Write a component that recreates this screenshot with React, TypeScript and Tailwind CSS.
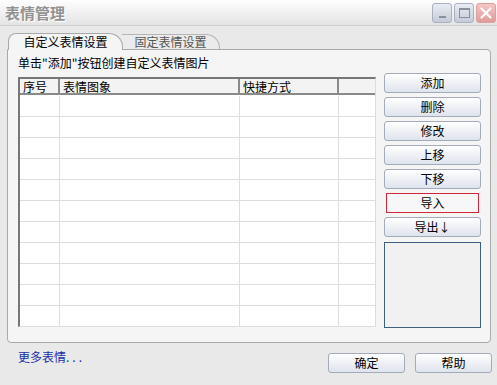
import React from 'react';

const btn =
  'h-[20px] w-[97px] flex items-center justify-center rounded-[3px] border border-[#a3abbb] bg-gradient-to-b from-[#ffffff] to-[#dfe3ec] text-[12px] text-black';

function WinButton({ kind }: { kind: 'min' | 'max' | 'close' }) {
  const close = kind === 'close';
  return (
    <div
      className={
        'w-[20px] h-[20px] rounded-[3px] border flex items-center justify-center ' +
        (close
          ? 'border-[#d9a0a0] bg-gradient-to-b from-[#f4c6c6] to-[#e19a9a]'
          : 'border-[#a8b0c2] bg-gradient-to-b from-[#e9ecf3] to-[#c5cbd8]')
      }
    >
      {kind === 'min' && <div className="w-[7px] h-[2px] bg-[#8890a0] mt-[8px]" />}
      {kind === 'max' && <div className="w-[11px] h-[10px] border border-[#8890a0] border-t-2" />}
      {close && (
        <svg width="12" height="12" viewBox="0 0 12 12">
          <path d="M1.5 1.5 L10.5 10.5 M10.5 1.5 L1.5 10.5" stroke="#fff" strokeWidth="2.2" strokeLinecap="round" />
        </svg>
      )}
    </div>
  );
}

export default function App() {
  const rows = Array.from({ length: 11 });
  const actions = ['添加', '删除', '修改', '上移', '下移'];

  return (
    <div
      className="w-[497px] h-[385px] bg-[#e9e9e9] flex flex-col overflow-hidden"
      style={{ fontFamily: '"Noto Sans CJK SC", "DejaVu Sans", sans-serif' }}
    >
      {/* title bar */}
      <div className="h-[26px] shrink-0 flex items-center justify-between pl-[5px] pr-[1px] bg-gradient-to-b from-[#fefefe] to-[#e4e4e4] border-b border-[#cfcfcf]">
        <span className="text-[15px] font-bold text-[#929292] leading-none [text-shadow:1px_1px_0_#fff]">表情管理</span>
        <div className="flex gap-[2px]">
          <WinButton kind="min" />
          <WinButton kind="max" />
          <WinButton kind="close" />
        </div>
      </div>

      {/* tabs */}
      <div className="px-[7px] pt-[7px]">
        <div className="flex h-[16px] items-end pl-[1px]">
          <div className="relative z-10 h-[17px] w-[115px] rounded-tl-[8px] rounded-tr-[14px] border border-b-0 border-[#a9a9a9] bg-[#f5f5f5] flex items-center justify-center text-[12px] text-black -mb-[1px]">
            自定义表情设置
          </div>
          <div className="h-[15px] w-[98px] -ml-[1px] rounded-tr-[14px] border border-b-0 border-l-0 border-[#b5b5b5] bg-[#ebebeb] flex items-center justify-center text-[12px] text-[#555]">
            固定表情设置
          </div>
        </div>

        {/* tab panel */}
        <div className="h-[294px] w-[484px] rounded-[4px] rounded-tl-none border border-[#a9a9a9] bg-[#f5f5f5] pl-[10px] pt-[6px]">
          <div className="h-[17px] text-[12px] leading-[14px] text-black">单击"添加"按钮创建自定义表情图片</div>
          <div className="flex">
            {/* table */}
            <div className="mt-[4px] w-[358px] h-[250px] border-l-2 border-t-2 border-[#777] border-r border-b border-r-[#dcdcdc] border-b-[#dcdcdc] bg-white flex flex-col">
              <div className="h-[16px] shrink-0 flex bg-[#f3f3f3] border-b-2 border-[#8a8a8a] text-[12px] leading-[15px]">
                <div className="w-[40px] pl-[3px] border-r-2 border-[#8a8a8a]">序号</div>
                <div className="w-[180px] pl-[3px] border-r-2 border-[#8a8a8a]">表情图象</div>
                <div className="w-[99px] pl-[3px] border-r-2 border-[#8a8a8a]">快捷方式</div>
                <div className="flex-1" />
              </div>
              <div className="mt-[1px]">
                {rows.map((_, i) => (
                  <div key={i} className="h-[21px] flex border-b border-[#dddddd]">
                    <div className="w-[40px] border-r border-[#dddddd]" />
                    <div className="w-[180px] border-r border-[#dddddd]" />
                    <div className="w-[99px] border-r border-[#dddddd]" />
                    <div className="flex-1" />
                  </div>
                ))}
              </div>
            </div>

            {/* buttons */}
            <div className="ml-[8px] flex flex-col gap-[4px]">
              {actions.map((a) => (
                <div key={a} className={btn}>
                  {a}
                </div>
              ))}
              <div className="h-[20px] w-[97px] flex items-center justify-center">
                <div className="h-[20px] w-[93px] flex items-center justify-center border border-[#d02838] bg-[#f7f7f9] text-[12px] text-black">
                  导入
                </div>
              </div>
              <div className={btn}>导出↓</div>
              <div className="mt-[1px] h-[86px] w-[97px] border border-[#3f5f80] bg-[#f1f1f1]" />
            </div>
          </div>
        </div>
      </div>

      {/* footer */}
      <div className="flex items-start pl-[18px] pr-[5px] pt-[4px]">
        <span className="text-[12px] text-[#1a2ea8] mt-[1px]">
          更多表情<span className="tracking-[3px]">...</span>
        </span>
        <div className="ml-auto flex gap-[10px] mt-[6px]">
          <div className={btn.replace('w-[97px]', 'w-[77px]')}>确定</div>
          <div className={btn.replace('w-[97px]', 'w-[77px]')}>帮助</div>
        </div>
      </div>
    </div>
  );
}
